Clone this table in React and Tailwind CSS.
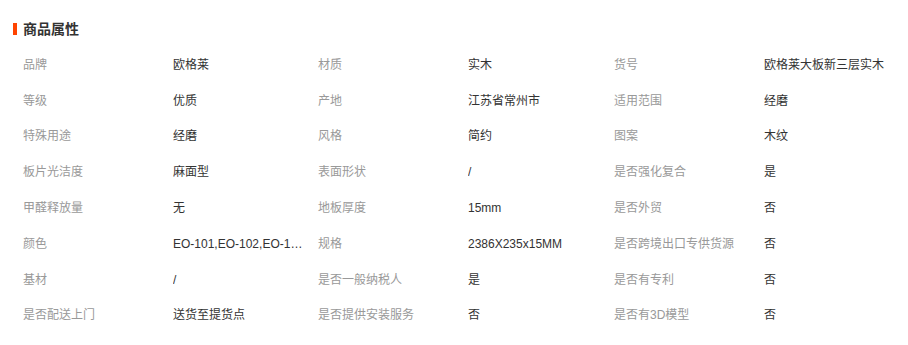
const ATTRS = [
  ['品牌', '欧格莱', '材质', '实木', '货号', '欧格莱大板新三层实木'],
  ['等级', '优质', '产地', '江苏省常州市', '适用范围', '经磨'],
  ['特殊用途', '经磨', '风格', '简约', '图案', '木纹'],
  ['板片光洁度', '麻面型', '表面形状', '/', '是否强化复合', '是'],
  ['甲醛释放量', '无', '地板厚度', '15mm', '是否外贸', '否'],
  ['颜色', 'EO-101,EO-102,EO-103,EO-104', '规格', '2386X235x15MM', '是否跨境出口专供货源', '否'],
  ['基材', '/', '是否一般纳税人', '是', '是否有专利', '否'],
  ['是否配送上门', '送货至提货点', '是否提供安装服务', '否', '是否有3D模型', '否'],
]

/* ── one label/value pair ─────────────────────────────────────────── */
function Cell({ label, value }) {
  return (
    <div className="flex items-center">
      <span className="w-[150px] shrink-0 text-[#999]">{label}</span>
      <span className="w-[130px] truncate text-[#333]">{value}</span>
    </div>
  )
}

export default function App() {
  return (
    <div
      className="w-[908px] h-[345px] bg-white pt-[19px] pl-[13px]"
      style={{ fontFamily: '"Liberation Sans", "Noto Sans CJK SC", sans-serif' }}
    >
      {/* Heading */}
      <div className="flex items-center h-[20px]">
        <span className="w-[4px] h-[12px] bg-[#ff4400]" />
        <h2 className="ml-[6px] text-[14px] font-bold text-[#333] leading-[20px]">商品属性</h2>
      </div>

      {/* Attribute grid */}
      <div className="mt-[8px] pl-[10px] text-[12px]">
        {ATTRS.map((row, i) => (
          <div key={i} className="grid grid-cols-[295px_296px_300px] h-[35.8px] items-center">
            <Cell label={row[0]} value={row[1]} />
            <Cell label={row[2]} value={row[3]} />
            <Cell label={row[4]} value={row[5]} />
          </div>
        ))}
      </div>
    </div>
  )
}
